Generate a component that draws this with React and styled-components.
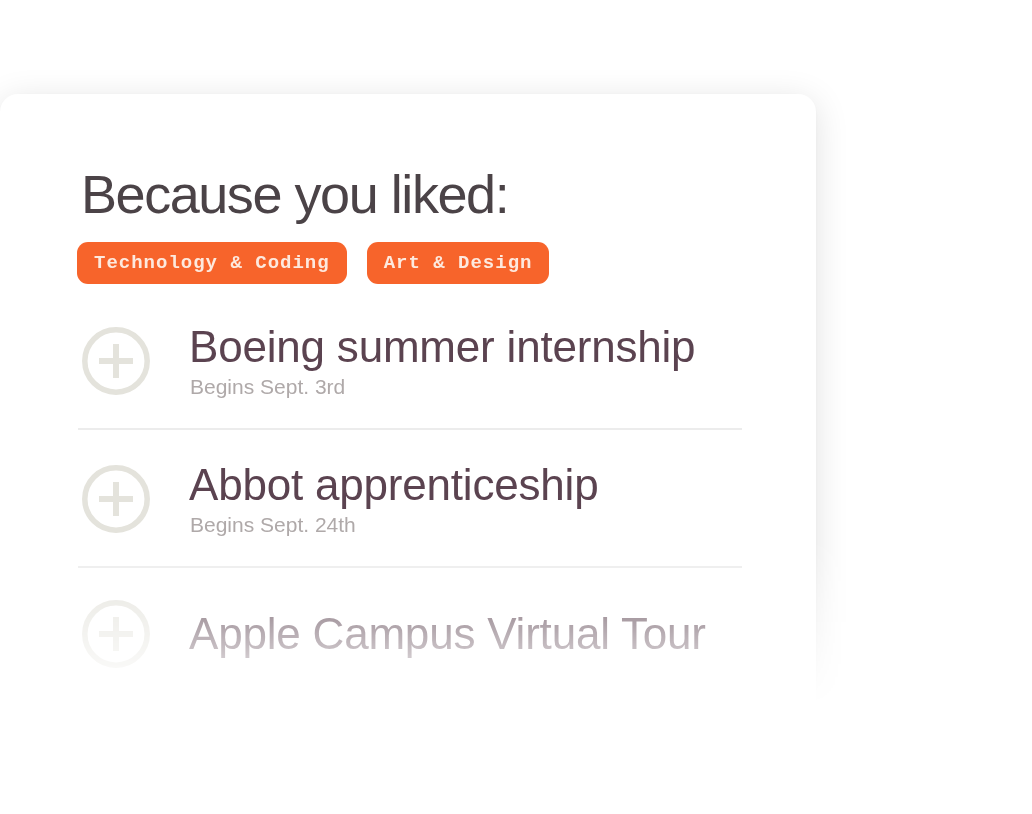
import React from "react";
import styled, { createGlobalStyle } from "styled-components";

const Global = createGlobalStyle`
  html, body { margin: 0; padding: 0; background: #ffffff; }
  body { font-family: "Liberation Sans", Arial, sans-serif; }
`;

const Stage = styled.div`
  width: 1032px;
  height: 814px;
  overflow: hidden;
  padding-top: 94px;
  box-sizing: border-box;
  -webkit-mask-image: linear-gradient(to bottom, #000 540px, transparent 705px);
  mask-image: linear-gradient(to bottom, #000 540px, transparent 705px);
`;

const Card = styled.section`
  width: 816px;
  height: 680px;
  box-sizing: border-box;
  background: #ffffff;
  border-radius: 18px;
  box-shadow: 0 6px 34px rgba(0, 0, 0, 0.12), 0 1px 4px rgba(0, 0, 0, 0.03);
  padding: 73px 74px 0 78px;
`;

const Heading = styled.h1`
  margin: 0;
  font-family: "Liberation Sans", Arial, sans-serif;
  font-weight: 400;
  font-size: 54px;
  line-height: 1;
  letter-spacing: -1.45px;
  color: #4b4347;
  padding-left: 3px;
`;

const Tags = styled.div`
  display: flex;
  gap: 20px;
  margin: 21px 0 8px -1px;
`;

const Tag = styled.span`
  display: inline-flex;
  align-items: center;
  height: 42px;
  padding: 0 17px 0 17px;
  border-radius: 11px;
  background: #f7642b;
  color: #fde9de;
  font-family: "Liberation Mono", "Courier New", monospace;
  font-weight: 700;
  font-size: 19px;
  letter-spacing: 1px;
  white-space: pre;
`;

const List = styled.ul`
  list-style: none;
  margin: 0;
  padding: 0;
`;

const Row = styled.li`
  display: flex;
  align-items: center;
  gap: 39px;
  padding: 33px 0 31px 4px;
  border-bottom: 2px solid #ececec;
  &:last-child { border-bottom: none; padding-top: 32px; }
`;

const AddIcon = styled.svg`
  flex: none;
  width: 68px;
  height: 68px;
`;

const Info = styled.div`
  display: flex;
  flex-direction: column;
  gap: 7px;
`;

const Title = styled.div`
  font-family: "Liberation Sans", Arial, sans-serif;
  font-size: 44px;
  line-height: 1;
  color: #5b4350;
  letter-spacing: -0.2px;
`;

const Sub = styled.div`
  font-family: "Liberation Sans", Arial, sans-serif;
  font-size: 21px;
  line-height: 1;
  color: #afa9a9;
  padding-left: 1px;
`;

const Plus = () => (
  <AddIcon viewBox="0 0 68 68" aria-hidden="true">
    <circle cx="34" cy="34" r="31.2" fill="none" stroke="#e4e3dc" strokeWidth="5.5" />
    <path d="M17 34H51M34 17V51" stroke="#e4e3dc" strokeWidth="6" fill="none" />
  </AddIcon>
);

const items = [
  { title: "Boeing summer internship", sub: "Begins Sept. 3rd" },
  { title: "Abbot apprenticeship", sub: "Begins Sept. 24th" },
  { title: "Apple Campus Virtual Tour" },
];

export default function App() {
  return (
    <>
      <Global />
      <Stage>
        <Card>
          <Heading>Because you liked:</Heading>
          <Tags>
            <Tag>Technology &amp; Coding</Tag>
            <Tag>Art &amp; Design</Tag>
          </Tags>
          <List>
            {items.map((it) => (
              <Row key={it.title}>
                <Plus />
                <Info>
                  <Title>{it.title}</Title>
                  {it.sub && <Sub>{it.sub}</Sub>}
                </Info>
              </Row>
            ))}
          </List>
        </Card>
      </Stage>
    </>
  );
}
